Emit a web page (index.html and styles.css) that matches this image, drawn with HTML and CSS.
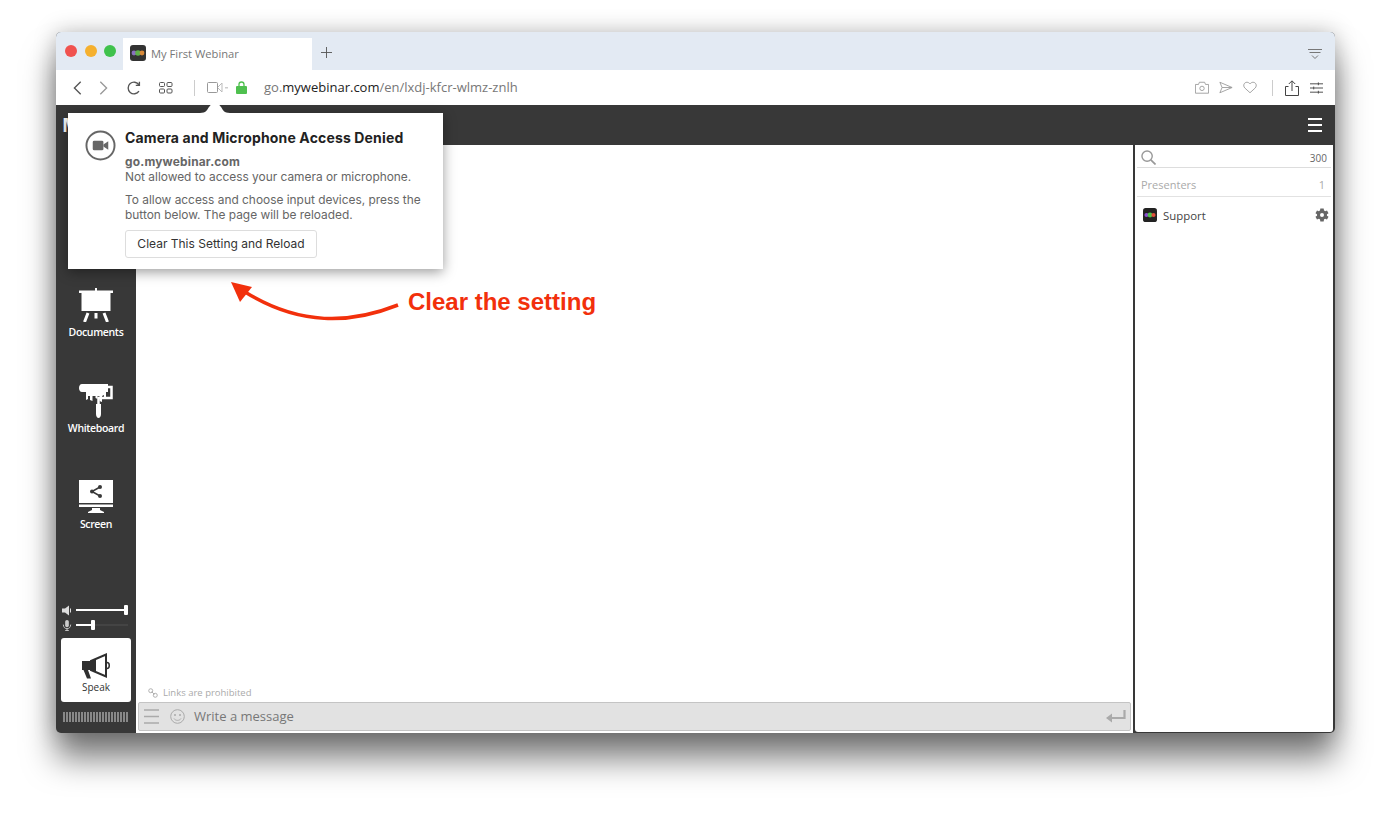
FILE: index.html
```html
<!DOCTYPE html>
<html lang="en">
<head>
  <meta charset="UTF-8">
  <title>My First Webinar</title>
  <link rel="stylesheet" href="styles.css">
</head>
<body>
  <div class="window">
    <div class="tabbar">
      <div class="lights">
        <span class="light red"></span>
        <span class="light yellow"></span>
        <span class="light green"></span>
      </div>
      <div class="tab">
        <svg class="favicon" viewBox="0 0 16 16">
          <rect width="16" height="16" rx="3" fill="#333"/>
          <circle cx="4" cy="8" r="2.4" fill="#8a6fc0"/>
          <circle cx="8" cy="8" r="2.8" fill="#5fb04a"/>
          <circle cx="12" cy="8" r="2.4" fill="#d98a3a"/>
        </svg>
        <span>My First Webinar</span>
      </div>
      <svg class="new-tab" viewBox="0 0 12 12"><path d="M6 0v12M0 6h12" stroke="#555" fill="none"/></svg>
      <svg class="tab-menu" viewBox="0 0 14 12"><path d="M0 .5h14M1.5 3.5h11M4 6.5l3 3 3-3" stroke="#777" fill="none"/></svg>
    </div>

    <div class="toolbar">
      <svg class="tool" viewBox="0 0 20 20"><path d="M13 3l-7 7 7 7" stroke="#555" stroke-width="1.5" fill="none"/></svg>
      <svg class="tool forward" viewBox="0 0 20 20"><path d="M7 3l7 7-7 7" stroke="#999" stroke-width="1.5" fill="none"/></svg>
      <svg class="tool reload" viewBox="0 0 20 20"><path d="M15.5 13.5a6.5 6.5 0 1 1 0-7M16 3v4h-4" stroke="#555" stroke-width="1.5" fill="none"/></svg>
      <svg class="tool grid" viewBox="0 0 14 12">
        <g fill="none" stroke="#555">
          <rect x=".5" y=".5" width="5" height="4" rx="1"/>
          <rect x="8" y=".5" width="5" height="4" rx="1"/>
          <rect x=".5" y="7" width="5" height="4" rx="1"/>
          <rect x="8" y="7" width="5" height="4" rx="1"/>
        </g>
      </svg>
      <span class="sep"></span>
      <svg class="cam" viewBox="0 0 22 12">
        <rect x=".5" y=".5" width="10" height="10" rx="1" fill="none" stroke="#999"/>
        <path d="M11 5l4-4v9l-4-4" fill="none" stroke="#bbb"/>
        <path d="M18 5h3v1.5h-3z" fill="#ccc"/>
      </svg>
      <svg class="lock" viewBox="0 0 11 13">
        <path d="M3 5V3.5a2.5 2.5 0 0 1 5 0V5" fill="none" stroke="#4fc04f" stroke-width="1.3"/>
        <rect y="5" width="11" height="8" rx="1" fill="#4fc04f"/>
      </svg>
      <div class="url">go.<b>mywebinar.com</b>/en/lxdj-kfcr-wlmz-znlh</div>
      <svg class="tool-r" viewBox="0 0 16 14"><path d="M.5 3.500h3.500l1-2.500h6l1 2.500h3.500v10H.5z" fill="none" stroke="#999"/><circle cx="8" cy="8" r="2.5" fill="none" stroke="#999"/></svg>
      <svg class="tool-r" viewBox="0 0 16 14"><path d="M1 1l14 6-14 6 2.500-6zM3.500 7h11" fill="none" stroke="#999"/></svg>
      <svg class="tool-r" viewBox="0 0 16 14"><path d="M8 13L2 7.500C-.5 4.500 1.500 1 4.500 1 6 1 7.200 1.800 8 3c.8-1.200 2-2 3.500-2 3 0 5 3.500 2.500 6.500z" fill="none" stroke="#999"/></svg>
      <span class="sep sep-r"></span>
      <svg class="tool-r share" viewBox="0 0 14 16"><path d="M3.500 6.500H.5v9h13v-9h-3M7 11V1M3.800 4L7 .8 10.200 4" fill="none" stroke="#444"/></svg>
      <svg class="tool-r tune" viewBox="0 0 14 12"><path d="M0 1.500h14M0 6h14M0 10.500h14M9 0v3M4 4.500v3M9 9v3" fill="none" stroke="#444"/></svg>
    </div>

    <div class="app-header">
      <span class="app-title">M</span>
      <div class="burger"><i></i><i></i><i></i></div>
    </div>

    <div class="app-body">
      <aside class="sidebar">
        <div class="side-item">
          <svg class="side-icon" viewBox="0 0 34 34">
            <rect x="16" y="0" width="2" height="3" fill="#fff"/>
            <rect x="0" y="2.5" width="34" height="2.5" fill="#fff"/>
            <rect x="2.5" y="5" width="29" height="18" fill="#fff"/>
            <path d="M9 25l-3.500 9M17 25v5.500M25 25l3.500 9" stroke="#fff" stroke-width="3" fill="none"/>
          </svg>
          <span>Documents</span>
        </div>
        <div class="side-item">
          <svg class="side-icon" viewBox="0 0 34 34">
            <path d="M3 0h26v8H27v6l-2-1v-2l-2 1v6l-2.500-1V12h-2v3l-2-1v-2h-3v5l-2.500-1v-4H9v3l-2 1V8H3C1 8 0 6 0 4s1-4 3-4z" fill="#fff"/>
            <path d="M29 3h3.500v11H19.500v6" fill="none" stroke="#fff" stroke-width="2.5"/>
            <path d="M17 20h5v10c0 2-1 4-2.500 4S17 32 17 30z" fill="#fff"/>
          </svg>
          <span>Whiteboard</span>
        </div>
        <div class="side-item">
          <svg class="side-icon" viewBox="0 0 34 34">
            <rect x="0" y="0" width="34" height="23" fill="#fff"/>
            <rect x="0" y="24.5" width="34" height="2.5" fill="#fff"/>
            <path d="M13 28h8v2l4 2v1H9v-1l4-2z" fill="#fff"/>
            <path d="M21 7l-8 4.500 8 4.500" stroke="#383838" stroke-width="1.5" fill="none"/>
            <circle cx="21" cy="7" r="2" fill="#383838"/>
            <circle cx="13" cy="11.5" r="2" fill="#383838"/>
            <circle cx="21" cy="16" r="2" fill="#383838"/>
          </svg>
          <span>Screen</span>
        </div>

        <div class="controls">
          <div class="slider-row">
            <svg class="slider-icon" viewBox="0 0 10 10"><path d="M0 3h3l4-3v10L3 7H0z" fill="#ddd"/><path d="M8.500 3v4" stroke="#ddd"/></svg>
            <div class="slider-track"><div class="slider-fill full"></div><span class="slider-knob"></span></div>
          </div>
          <div class="slider-row">
            <svg class="slider-icon" viewBox="0 0 10 12"><rect x="3" width="4" height="8" rx="2" fill="#ccc"/><path d="M1 5c0 6 8 6 8 0M5 9v3M3 11.500h4" fill="none" stroke="#ccc"/></svg>
            <div class="slider-track"><div class="slider-fill low"></div><span class="slider-knob"></span></div>
          </div>
        </div>

        <div class="speak">
          <svg class="speak-icon" viewBox="0 0 30 26">
            <path d="M1 8h9v9H7l3 8.500H6L2.500 17H1z" fill="#2f2f2f"/>
            <path d="M10 8L25 1.500v22L10 17z" fill="#fff" stroke="#2f2f2f" stroke-width="2"/>
            <path d="M10 8l5-2v13l-5-2z" fill="#2f2f2f"/>
            <path d="M26 9.500c3 0 3 6 0 6" fill="none" stroke="#2f2f2f" stroke-width="1.5"/>
          </svg>
          <span>Speak</span>
        </div>
        <div class="meter"></div>
      </aside>

      <main class="chat">
        <div class="links-note">
          <svg class="link-icon" viewBox="0 0 11 11"><circle cx="3" cy="3" r="2.2" fill="none" stroke="#aaa"/><circle cx="8" cy="8" r="2.2" fill="none" stroke="#aaa"/><path d="M4 4l3 3" stroke="#aaa"/></svg>
          Links are prohibited
        </div>
        <div class="message-bar">
          <svg class="msg-menu" viewBox="0 0 15 15"><path d="M0 1h15M0 7.500h15M0 14h15" stroke="#aaa" stroke-width="1.5" fill="none"/></svg>
          <svg class="msg-smile" viewBox="0 0 15 15"><circle cx="7.5" cy="7.5" r="6.8" fill="none" stroke="#aaa"/><circle cx="5" cy="6" r="1" fill="#aaa"/><circle cx="10" cy="6" r="1" fill="#aaa"/><path d="M4 9.500c1.500 2.500 5.500 2.500 7 0" fill="none" stroke="#aaa"/></svg>
          <span class="msg-text">Write a message</span>
          <svg class="msg-enter" viewBox="0 0 20 14"><path d="M18.500 0v8H3" fill="none" stroke="#aaa" stroke-width="2.2"/><path d="M0 8l6-4.500v9z" fill="#aaa"/></svg>
        </div>
      </main>

      <aside class="people">
        <div class="people-search">
          <svg class="search-icon" viewBox="0 0 16 16"><circle cx="6.5" cy="6.5" r="5.5" fill="none" stroke="#999" stroke-width="1.5"/><path d="M10.500 10.500L15.500 15.500" stroke="#999" stroke-width="1.8"/></svg>
          <span>300</span>
        </div>
        <div class="people-head"><span>Presenters</span><span>1</span></div>
        <div class="person">
          <svg class="person-icon" viewBox="0 0 16 16">
            <rect width="16" height="16" rx="3" fill="#222"/>
            <circle cx="4" cy="8" r="2.4" fill="#8a4fd0"/>
            <circle cx="8" cy="8" r="2.8" fill="#4fc04a"/>
            <circle cx="12" cy="8" r="2.4" fill="#e0503a"/>
          </svg>
          <span class="person-name">Support</span>
          <svg class="gear" viewBox="0 0 24 24"><path fill="#666" fill-rule="evenodd" d="M19.400 13a7.500 7.500 0 0 0 0-2l2.400-1.800-2.300-4-2.800 1.100a7.500 7.500 0 0 0-1.700-1L14.500 2.400h-5L9 5.300a7.500 7.500 0 0 0-1.700 1L4.500 5.200l-2.300 4L4.600 11a7.500 7.500 0 0 0 0 2l-2.400 1.800 2.300 4 2.800-1.100a7.500 7.500 0 0 0 1.700 1l.5 2.900h5l.5-2.900a7.500 7.500 0 0 0 1.700-1l2.800 1.100 2.300-4zM12 15a3 3 0 1 1 0-6 3 3 0 0 1 0 6z"/></svg>
        </div>
      </aside>
    </div>

    <div class="popup">
      <svg class="popup-tip" viewBox="0 0 30 13"><path d="M0 13C6 13 7 10 9 7L15 0L21 7C23 10 24 13 30 13z" fill="#fff"/></svg>
      <svg class="popup-icon" viewBox="0 0 32 32">
        <circle cx="16" cy="16" r="14.5" fill="none" stroke="#666" stroke-width="2"/>
        <rect x="8" y="11" width="11" height="10" rx="1.5" fill="#666"/>
        <path d="M19 15l5-3.500v9L19 17z" fill="#666"/>
      </svg>
      <div class="popup-body">
        <h4>Camera and Microphone Access Denied</h4>
        <p class="site"><b>go.mywebinar.com</b><br>Not allowed to access your camera or microphone.</p>
        <p>To allow access and choose input devices, press the button below. The page will be reloaded.</p>
        <button class="clear-btn">Clear This Setting and Reload</button>
      </div>
    </div>

    <svg class="arrow" viewBox="0 0 180 50">
      <path d="M168 24C120 43 70 45 15 11" fill="none" stroke="#f2300c" stroke-width="3.5"/>
      <path d="M1 1L22 6 10 21z" fill="#f2300c"/>
    </svg>
    <div class="note">Clear the setting</div>
  </div>
</body>
</html>
```

FILE: styles.css
```css
html {
  height: 100%;
}
body {
  margin: 0;
  height: 814px;
  padding: 32px 0 0 56px;
  box-sizing: border-box;
  background-color: #fff;
  font-family: 'Open Sans', 'Liberation Sans', sans-serif;
  color: #333;
}
b { font-weight: bold; }

.window {
  position: relative;
  display: flex;
  flex-direction: column;
  width: 1279px;
  height: 701px;
  border-radius: 5px;
  background-color: #383838;
  box-shadow: 0 26px 32px rgba(0, 0, 0, 0.5), 0 0 22px rgba(0, 0, 0, 0.25);
}

/* tab strip */
.tabbar {
  display: flex;
  align-items: flex-end;
  height: 38px;
  flex-shrink: 0;
  background-color: #e3eaf3;
  border-radius: 5px 5px 0 0;
}
.lights {
  display: flex;
  gap: 7.5px;
  align-self: center;
  padding: 0 7px 0 9px;
  margin-top: -1px;
}
.light {
  width: 12px;
  height: 12px;
  border-radius: 50%;
}
.light.red { background-color: #f0524f; }
.light.yellow { background-color: #f5b02e; }
.light.green { background-color: #3fc24c; }
.tab {
  display: flex;
  align-items: center;
  gap: 5px;
  width: 182px;
  height: 30px;
  padding: 0 0 2px 7px;
  background-color: #fff;
  font-size: 11.2px;
  color: #777;
}
.favicon { width: 16px; height: 16px; }
.new-tab {
  width: 11px;
  height: 11px;
  margin: 0 0 12px 9px;
}
.tab-menu {
  width: 14px;
  height: 12px;
  margin: 0 13px 9px auto;
}

/* address bar */
.toolbar {
  display: flex;
  align-items: center;
  height: 35px;
  flex-shrink: 0;
  background-color: #fff;
  padding-left: 13px;
}
.tool { width: 18px; height: 18px; margin-right: 7px; }
.tool.forward { margin-right: 13px; }
.tool.reload { margin-right: 16px; }
.tool.grid { width: 14px; height: 12px; margin-right: 21px; }
.sep {
  width: 1px;
  height: 16px;
  background-color: #ccc;
}
.cam { width: 22px; height: 12px; margin-left: 12px; }
.lock { width: 11px; height: 13px; margin-left: 7px; }
.url {
  flex: 1;
  margin-left: 17px;
  padding-bottom: 2px;
  font-size: 13px;
  color: #777;
}
.url b { font-weight: normal; color: #222; }
.tool-r { width: 14px; height: 13px; margin-right: 10px; }
.sep-r { margin: 0 12px 0 5px; }
.share { width: 14px; height: 16px; margin-right: 11px; }
.tune { width: 13px; height: 12px; margin-right: 12px; }

/* app */
.app-header {
  display: flex;
  align-items: center;
  justify-content: space-between;
  height: 40px;
  flex-shrink: 0;
  padding: 0 13px 0 6px;
}
.app-title {
  color: #fff;
  font-size: 19px;
  font-weight: bold;
}
.burger {
  display: flex;
  flex-direction: column;
  gap: 4px;
  width: 14px;
}
.burger i {
  height: 2px;
  background-color: #fff;
}
.app-body {
  display: flex;
  flex: 1;
  min-height: 0;
}

/* left column */
.sidebar {
  display: flex;
  flex-direction: column;
  align-items: center;
  width: 80px;
  flex-shrink: 0;
  padding-top: 143px;
  box-sizing: border-box;
}
.side-item {
  display: flex;
  flex-direction: column;
  align-items: center;
  height: 96px;
  flex-shrink: 0;
  color: #fff;
  font-size: 10.5px;
  font-weight: 600;
  letter-spacing: -0.35px;
}
.side-icon {
  width: 34px;
  height: 34px;
  margin-bottom: 3px;
}
.controls {
  display: flex;
  flex-direction: column;
  gap: 5px;
  margin: auto 2px 0 0;
  width: 66px;
}
.slider-row {
  display: flex;
  align-items: center;
  height: 10px;
  gap: 4px;
}
.slider-icon { width: 10px; height: 11px; flex-shrink: 0; }
.slider-track {
  position: relative;
  display: flex;
  align-items: center;
  flex: 1;
  height: 2px;
  background-color: #444;
}
.slider-fill { height: 2px; background-color: #fff; }
.slider-fill.full { width: 100%; }
.slider-fill.low { width: 34%; }
.slider-knob {
  width: 4px;
  height: 10px;
  margin-left: -3px;
  background-color: #fff;
  border-radius: 1px;
  flex-shrink: 0;
}
.speak {
  display: flex;
  flex-direction: column;
  align-items: center;
  width: 70px;
  height: 64px;
  margin-top: 8px;
  padding-top: 15px;
  box-sizing: border-box;
  background-color: #fff;
  border-radius: 3px;
  font-size: 10px;
  color: #333;
}
.speak-icon { width: 30px; height: 26px; margin-bottom: 1px; }
.meter {
  width: 66px;
  height: 10px;
  margin: 10px 0 11px;
  background-image: repeating-linear-gradient(90deg, #888 0, #888 2px, transparent 2px, transparent 3px);
}

/* chat */
.chat {
  display: flex;
  flex-direction: column;
  justify-content: flex-end;
  flex: 1;
  min-width: 0;
  background-color: #fff;
  padding-bottom: 2px;
}
.links-note {
  display: flex;
  align-items: center;
  gap: 5px;
  padding: 0 0 3px 12px;
  font-size: 9.5px;
  color: #aaa;
}
.link-icon { width: 10px; height: 10px; }
.message-bar {
  display: flex;
  align-items: center;
  height: 29px;
  margin: 0 2px;
  padding: 0 4px 0 5px;
  box-sizing: border-box;
  background-color: #e2e2e2;
  border: 1px solid #c4c4c4;
  border-radius: 2px;
  font-size: 13px;
  color: #777;
}
.msg-menu { width: 15px; height: 15px; margin-right: 11px; }
.msg-smile { width: 15px; height: 15px; margin-right: 9px; }
.msg-text { flex: 1; padding-bottom: 1px; }
.msg-enter { width: 20px; height: 14px; }

/* right column */
.people {
  display: flex;
  flex-direction: column;
  width: 198px;
  margin: 0 2px 1px 2px;
  background-color: #fff;
  border-radius: 0 0 3px 3px;
  flex-shrink: 0;
}
.people-search {
  display: flex;
  align-items: center;
  justify-content: space-between;
  height: 23px;
  margin: 0 2px;
  padding: 3px 4px 0;
  box-sizing: border-box;
  border-bottom: 1px solid #ddd;
  font-size: 10px;
  color: #666;
}
.search-icon { width: 15px; height: 15px; }
.people-head {
  display: flex;
  align-items: center;
  justify-content: space-between;
  height: 29px;
  margin: 0 2px;
  padding: 4px 6px 0 4px;
  box-sizing: border-box;
  border-bottom: 1px solid #e2e2e2;
  font-size: 11px;
  color: #aaa;
}
.person {
  display: flex;
  align-items: center;
  height: 36px;
  padding: 0 5px 0 8px;
  font-size: 11.4px;
  color: #444;
}
.person-icon { width: 14px; height: 14px; margin-right: 6px; }
.person-name { flex: 1; }
.gear { width: 16px; height: 16px; margin-right: -2px; }

/* permission popup */
.popup {
  position: absolute;
  left: 12px;
  top: 81px;
  display: flex;
  width: 375px;
  height: 156px;
  box-sizing: border-box;
  padding: 16px 0 0 17px;
  background-color: #fff;
  box-shadow: 0 3px 12px rgba(0, 0, 0, 0.4);
}
.popup-tip {
  position: absolute;
  left: 132px;
  top: -13px;
  width: 30px;
  height: 13px;
}
.popup-icon {
  width: 31px;
  height: 31px;
  flex-shrink: 0;
  margin: 1px 9px 0 0;
}
.popup-body {
  position: relative;
  font-family: 'Inter', 'Liberation Sans', sans-serif;
  font-size: 11.9px;
  line-height: 15px;
  color: #666;
}
.popup-body h4 {
  margin: 0 0 8px;
  font-size: 14px;
  line-height: 17px;
  font-weight: bold;
  letter-spacing: 0.15px;
  color: #222;
}
.popup-body p { margin: 0 0 8px; width: 305px; }
.site b { letter-spacing: 0.2px; }
.clear-btn {
  display: block;
  width: 192px;
  height: 28px;
  margin-top: 8px;
  padding: 0 0 1px;
  background-color: #fff;
  border: 1px solid #ddd;
  border-radius: 3px;
  font-family: inherit;
  font-size: 12px;
  color: #333;
}

/* red annotation */
.arrow {
  position: absolute;
  left: 174px;
  top: 249px;
  width: 180px;
  height: 50px;
}
.note {
  position: absolute;
  left: 352px;
  top: 256px;
  font-family: 'Liberation Sans', sans-serif;
  font-size: 24px;
  font-weight: bold;
  color: #f2300c;
}
```
